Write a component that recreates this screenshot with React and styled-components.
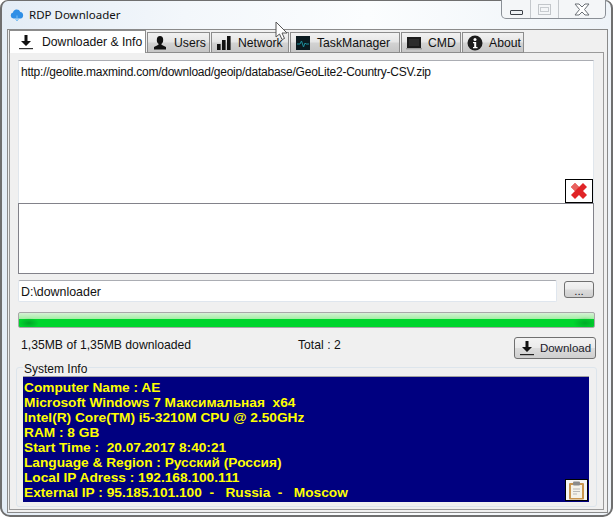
import React from 'react';
import styled, { createGlobalStyle } from 'styled-components';

const GlobalStyle = createGlobalStyle`
  html, body { margin: 0; padding: 0; background: #fff; }
  body { width: 614px; height: 518px; overflow: hidden; font-family: "Liberation Sans", Arial, sans-serif; }
`;

const Frame = styled.div`
  position: relative;
  box-sizing: border-box;
  width: 613px;
  height: 517px;
  padding: 0 3px 2px 5px;
  border: 2px solid #6f6f6f;
  border-top-width: 1px;
  border-radius: 8px 8px 10px 10px;
  background: linear-gradient(90deg, #e4edf6 0%, #f3f7fb 30%, #fbfdfe 60%, #eef3f8 100%);
`;

const TitleBar = styled.div`
  display: flex;
  align-items: flex-start;
  height: 28px;
`;

const TitleIcon = styled.svg`
  width: 14px;
  height: 13px;
  margin: 8px 5px 0 3px;
`;

const TitleText = styled.div`
  margin-top: 6px;
  font-family: "Noto Sans", sans-serif;
  font-size: 11.5px;
  line-height: 16px;
  color: #111;
`;

const Controls = styled.div`
  display: flex;
  box-sizing: border-box;
  height: 19px;
  margin: -1px 2px 0 auto;
  border: 1px solid #8a8f96;
  border-top: none;
  border-radius: 0 0 5px 5px;
  background: #f4f6f8;
`;

const ControlCell = styled.div`
  display: flex;
  align-items: center;
  justify-content: center;
  width: ${(p) => p.$w}px;
  border-left: ${(p) => (p.$first ? 'none' : '1px solid #c4c8cc')};
`;

const MinGlyph = styled.div`
  box-sizing: border-box;
  width: 13px;
  height: 5px;
  margin-top: 7px;
  border: 1px solid #3c4148;
  border-radius: 1px;
  background: #eef1f4;
`;

const MaxGlyph = styled.div`
  box-sizing: border-box;
  width: 13px;
  height: 11px;
  border: 1px solid #c2c6ca;
  display: flex;
  align-items: center;
  justify-content: center;
  &::after {
    content: '';
    width: 7px;
    height: 3px;
    border: 1px solid #c8ccd0;
  }
`;

const Client = styled.div`
  box-sizing: border-box;
  height: 484px;
  padding: 0 3px 2px 1px;
  border: 1px solid #8a8a8a;
  background: #f0f0f0;
`;

const TabStrip = styled.div`
  display: flex;
  align-items: flex-end;
  gap: 1px;
  height: 23px;
  margin-bottom: -1px;
  position: relative;
  z-index: 1;
`;

const Tab = styled.div`
  display: flex;
  align-items: center;
  box-sizing: border-box;
  width: ${(p) => p.$w}px;
  height: ${(p) => (p.$active ? 23 : 21)}px;
  padding-left: ${(p) => (p.$active ? 8 : 4)}px;
  gap: ${(p) => (p.$active ? 8 : 6)}px;
  border: 1px solid #8c8c8c;
  border-bottom: ${(p) => (p.$active ? 'none' : '1px solid #8c8c8c')};
  background: ${(p) => (p.$active ? '#fff' : 'linear-gradient(#f2f2f2, #e6e6e6 45%, #d2d2d2 55%, #c6c6c6)')};
  font-size: 12.2px;
  color: #111;
  white-space: nowrap;
`;

const TabIcon = styled.svg`
  flex: none;
  width: 16px;
  height: 16px;
`;

const Panel = styled.div`
  box-sizing: border-box;
  height: 458px;
  padding: 7px 6px 0;
  border: 1px solid #9a9a9a;
  background: #f0f0f0;
`;

const ListWrap = styled.div`
  margin: 0 3px 0 2px;
`;

const UrlList = styled.div`
  position: relative;
  box-sizing: border-box;
  height: 143px;
  padding: 4px 2px;
  border: 1px solid #e0e6ec;
  border-top-color: #abadb3;
  border-bottom: none;
  background: #fff;
  font-size: 12px;
  letter-spacing: -0.24px;
  line-height: 15px;
  color: #111;
`;

const DeleteButton = styled.div`
  position: absolute;
  right: 0;
  bottom: 0;
  box-sizing: border-box;
  display: flex;
  align-items: center;
  justify-content: center;
  width: 28px;
  height: 24px;
  border: 1px solid #000;
  background: #fff;
`;

const LogBox = styled.div`
  box-sizing: border-box;
  height: 71px;
  border: 1px solid #82828a;
  background: #fff;
`;

const PathRow = styled.div`
  display: flex;
  align-items: flex-start;
  margin: 6px 3px 0 2px;
`;

const PathInput = styled.div`
  box-sizing: border-box;
  flex: 1;
  height: 22px;
  padding-left: 2px;
  border: 1px solid #dfe6ee;
  border-top-color: #abadb3;
  border-radius: 2px;
  background: #fff;
  font-size: 12.4px;
  line-height: 22px;
  color: #111;
`;

const Button = styled.div`
  display: flex;
  align-items: center;
  justify-content: center;
  box-sizing: border-box;
  width: ${(p) => p.$w}px;
  height: ${(p) => p.$h}px;
  gap: 5px;
  border: 1px solid #707070;
  border-radius: 3px;
  background: linear-gradient(#f3f3f3, #ebebeb 48%, #dcdcdc 52%, #cfcfcf);
  font-size: 11.5px;
  color: #1a1a2a;
  white-space: nowrap;
`;

const BrowseButton = styled(Button)`
  flex: none;
  margin: 1px 0 0 7px;
  align-items: flex-end;
  line-height: 12px;
`;

const Progress = styled.div`
  box-sizing: border-box;
  height: 16px;
  margin: 10px 2px 0 2px;
  border: 1px solid #a8a8a8;
  border-radius: 2px;
  background:
    radial-gradient(ellipse 10px 5px at 10px 10px, rgba(0, 110, 30, 0.45), transparent),
    radial-gradient(ellipse 12px 6px at 566px 10px, rgba(0, 110, 30, 0.4), transparent),
    linear-gradient(#d6f2d6, #a6eea6 40%, #00d52e 45%, #00d52e);
`;

const StatusRow = styled.div`
  display: grid;
  grid-template-columns: 277px 1fr auto;
  height: 22px;
  margin: 9px 1px 0 5px;
  font-size: 12.2px;
  line-height: 16px;
  color: #111;
`;

const Group = styled.div`
  position: relative;
  box-sizing: border-box;
  height: 140px;
  margin-top: 8px;
  padding: 8px 7px 0 6px;
  border: 1px solid #dde5ec;
  border-radius: 3px;
`;

const GroupLabel = styled.div`
  position: absolute;
  top: -6px;
  left: 6px;
  padding: 0 1px;
  background: #f0f0f0;
  font-size: 12px;
  line-height: 14px;
  color: #111;
`;

const InfoBox = styled.div`
  position: relative;
  box-sizing: border-box;
  height: 126px;
  padding: 3px 1px 0;
  border-top: 1px solid #a0a0a0;
  background: #000080;
  font-size: 13.7px;
  font-weight: bold;
  line-height: 15px;
  color: #ffff00;
  white-space: pre;
`;

const CopyButton = styled.div`
  position: absolute;
  right: 1px;
  bottom: 1px;
  box-sizing: border-box;
  display: flex;
  align-items: center;
  justify-content: center;
  width: 23px;
  height: 22px;
  border: 1px solid #000;
  background: #f4f4f4;
`;

const Cursor = styled.svg`
  position: absolute;
  z-index: 2;
  left: 272px;
  top: 20px;
  width: 16px;
  height: 20px;
`;

const DownloadGlyph = () => (
  <TabIcon viewBox="0 0 16 16">
    <path d="M6.5 1h3v6H13l-5 5-5-5h3.5z" fill="#111" />
    <rect x="1" y="14" width="14" height="1.2" fill="#333" />
  </TabIcon>
);

const UserGlyph = () => (
  <TabIcon viewBox="0 0 16 16">
    <ellipse cx="8" cy="5" rx="3.2" ry="4" fill="#111" />
    <path d="M6.5 8h3v1.8l4.5 2.2v2.5H2V12l4.5-2.2z" fill="#111" />
  </TabIcon>
);

const BarsGlyph = () => (
  <TabIcon viewBox="0 0 16 16">
    <rect x="1" y="9" width="3.6" height="6" fill="#111" />
    <rect x="6" y="5" width="3.6" height="10" fill="#111" />
    <rect x="11" y="1" width="3.6" height="14" fill="#111" />
  </TabIcon>
);

const MonitorGlyph = () => (
  <TabIcon viewBox="0 0 16 16">
    <rect x="1" y="1" width="14" height="14" fill="#0b1a20" />
    <path d="M2 9h3l1.5-3 2 6 1.5-4 1 1h3" fill="none" stroke="#1d8f9c" strokeWidth="1" />
  </TabIcon>
);

const ConsoleGlyph = () => (
  <TabIcon viewBox="0 0 16 16">
    <rect x="1" y="2" width="14" height="11" fill="#1b1b1b" />
    <rect x="3" y="4" width="10" height="7" fill="#2c2c2c" />
    <rect x="0" y="13" width="16" height="1.4" fill="#9a9a9a" />
  </TabIcon>
);

const InfoGlyph = () => (
  <TabIcon viewBox="0 0 16 16">
    <circle cx="8" cy="8" r="7.5" fill="#1c1c1c" />
    <circle cx="8" cy="4.5" r="1.5" fill="#fff" />
    <path d="M6 7h3.2v5H10.500v1.300H6V12h1.200V8.300H6z" fill="#fff" />
  </TabIcon>
);

const tabs = [
  { label: 'Users', w: 63, icon: <UserGlyph /> },
  { label: 'Network', w: 78, icon: <BarsGlyph /> },
  { label: 'TaskManager', w: 110, icon: <MonitorGlyph /> },
  { label: 'CMD', w: 60, icon: <ConsoleGlyph /> },
  { label: 'About', w: 62, icon: <InfoGlyph /> },
];

const infoLines = [
  'Computer Name : AE',
  'Microsoft Windows 7 Максимальная  x64',
  'Intel(R) Core(TM) i5-3210M CPU @ 2.50GHz',
  'RAM : 8 GB',
  'Start Time :  20.07.2017 8:40:21',
  'Language & Region : Русский (Россия)',
  'Local IP Adress : 192.168.100.111',
  'External IP : 95.185.101.100  -   Russia  -   Moscow',
];

export default function App() {
  return (
    <>
      <GlobalStyle />
      <Frame>
        <TitleBar>
          <TitleIcon viewBox="0 0 14 13">
            <path d="M3.500 9.500A3 3 0 0 1 3 3.600 3.800 3.800 0 0 1 10.300 3 3.300 3.300 0 0 1 10.500 9.500z" fill="#2f8fe6" />
            <path d="M7 6.500v5M5.500 10.200L7 12l1.500-1.800" stroke="#7cc0f4" strokeWidth="1" fill="none" />
          </TitleIcon>
          <TitleText>RDP Downloader</TitleText>
          <Controls>
            <ControlCell $w={28} $first><MinGlyph /></ControlCell>
            <ControlCell $w={27}><MaxGlyph /></ControlCell>
            <ControlCell $w={46}>
              <svg width="18" height="13" viewBox="0 0 18 13">
                <path d="M2 1h4l3 3 3-3h4l-4.500 5.500L16 12h-4L9 9l-3 3H2l4.500-5.500z" fill="#fff" stroke="#6b7076" strokeWidth="1" />
              </svg>
            </ControlCell>
          </Controls>
        </TitleBar>
        <Client>
          <TabStrip>
            <Tab $active $w={137}>
              <DownloadGlyph />
              Downloader &amp; Info
            </Tab>
            {tabs.map((t) => (
              <Tab key={t.label} $w={t.w}>
                {t.icon}
                {t.label}
              </Tab>
            ))}
          </TabStrip>
          <Panel>
            <ListWrap>
              <UrlList>
                http://geolite.maxmind.com/download/geoip/database/GeoLite2-Country-CSV.zip
                <DeleteButton>
                  <svg width="18" height="18" viewBox="0 0 18 18">
                    <path d="M5 1l4 4 4-4 4 4-4 4 4 4-4 4-4-4-4 4-4-4 4-4-4-4z" fill="#e02427" />
                    <path d="M5 1l4 4-4 4-4-4z" fill="#e8635f" />
                  </svg>
                </DeleteButton>
              </UrlList>
              <LogBox />
            </ListWrap>
            <PathRow>
              <PathInput>D:\downloader</PathInput>
              <BrowseButton $w={30} $h={17}>...</BrowseButton>
            </PathRow>
            <Progress />
            <StatusRow>
              <span>1,35MB of 1,35MB downloaded</span>
              <span>Total : 2</span>
              <Button $w={82} $h={22}>
                <TabIcon viewBox="0 0 16 16">
                  <path d="M6.500 1h3v6H13l-5 5-5-5h3.500z" fill="#111" />
                  <rect x="1" y="14" width="14" height="1.200" fill="#222" />
                </TabIcon>
                Download
              </Button>
            </StatusRow>
            <Group>
              <GroupLabel>System Info</GroupLabel>
              <InfoBox>
                {infoLines.map((line) => (
                  <div key={line}>{line}</div>
                ))}
                <CopyButton>
                  <svg width="17" height="19" viewBox="0 0 17 19">
                    <rect x="1" y="2" width="15" height="16.500" rx="1" fill="#c8954f" />
                    <rect x="3" y="4" width="11" height="13" fill="#f4f2ea" />
                    <rect x="5" y="0.500" width="7" height="4" rx="1" fill="#8a8a8a" />
                    <path d="M5 8h7M5 10.500h7M5 13h4" stroke="#b8b8b8" strokeWidth="1" />
                  </svg>
                </CopyButton>
              </InfoBox>
            </Group>
          </Panel>
        </Client>
        <Cursor viewBox="0 0 16 20">
          <path d="M2 1v15l3.500-3 2.500 5.500 2.500-1L8 12h5z" fill="#fff" stroke="#555" strokeWidth="1" />
        </Cursor>
      </Frame>
    </>
  );
}
